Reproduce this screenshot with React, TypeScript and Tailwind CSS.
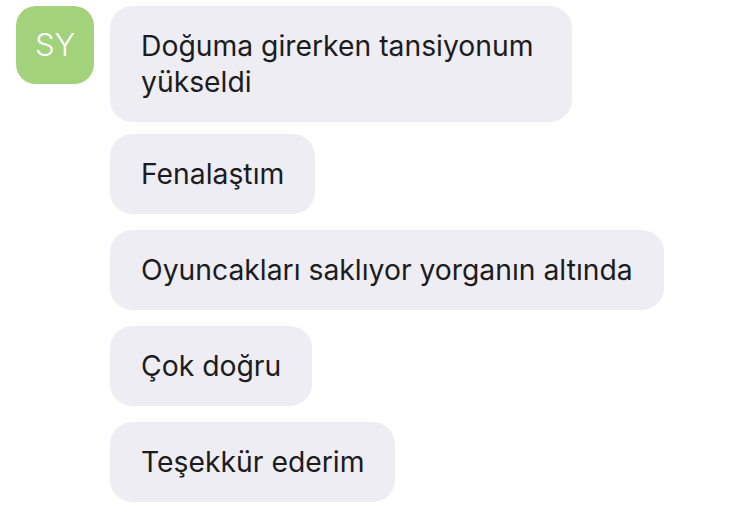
const messages = [
  "Fenalaştım",
  "Oyuncakları saklıyor yorganın altında",
  "Çok doğru",
  "Teşekkür ederim",
];

export default function App() {
  return (
    <div
      className="min-h-screen w-full bg-white pl-4 pt-[6px]"
      style={{ fontFamily: "Inter, 'Noto Sans', sans-serif" }}
    >
      <div className="flex items-start gap-4">
        <div className="flex h-[78px] w-[78px] shrink-0 items-center justify-center rounded-[20px] bg-[#a2d27c] text-[31px] font-light text-white">
          SY
        </div>
        <div className="flex flex-col items-start gap-4">
          <div className="-mb-1 w-[462px] rounded-[22px] bg-[#eeedf4] px-[31px] py-[22px] text-[28.3px] leading-[36px] text-[#1c1c1e]">
            Doğuma girerken tansiyonum
            <br />
            yükseldi
          </div>
          {messages.map((text, idx) => (
            <div
              key={idx}
              className="whitespace-nowrap rounded-[22px] bg-[#eeedf4] px-[31px] py-[22px] text-[28.3px] leading-[36px] text-[#1c1c1e]"
            >
              {text}
            </div>
          ))}
        </div>
      </div>
    </div>
  );
}
